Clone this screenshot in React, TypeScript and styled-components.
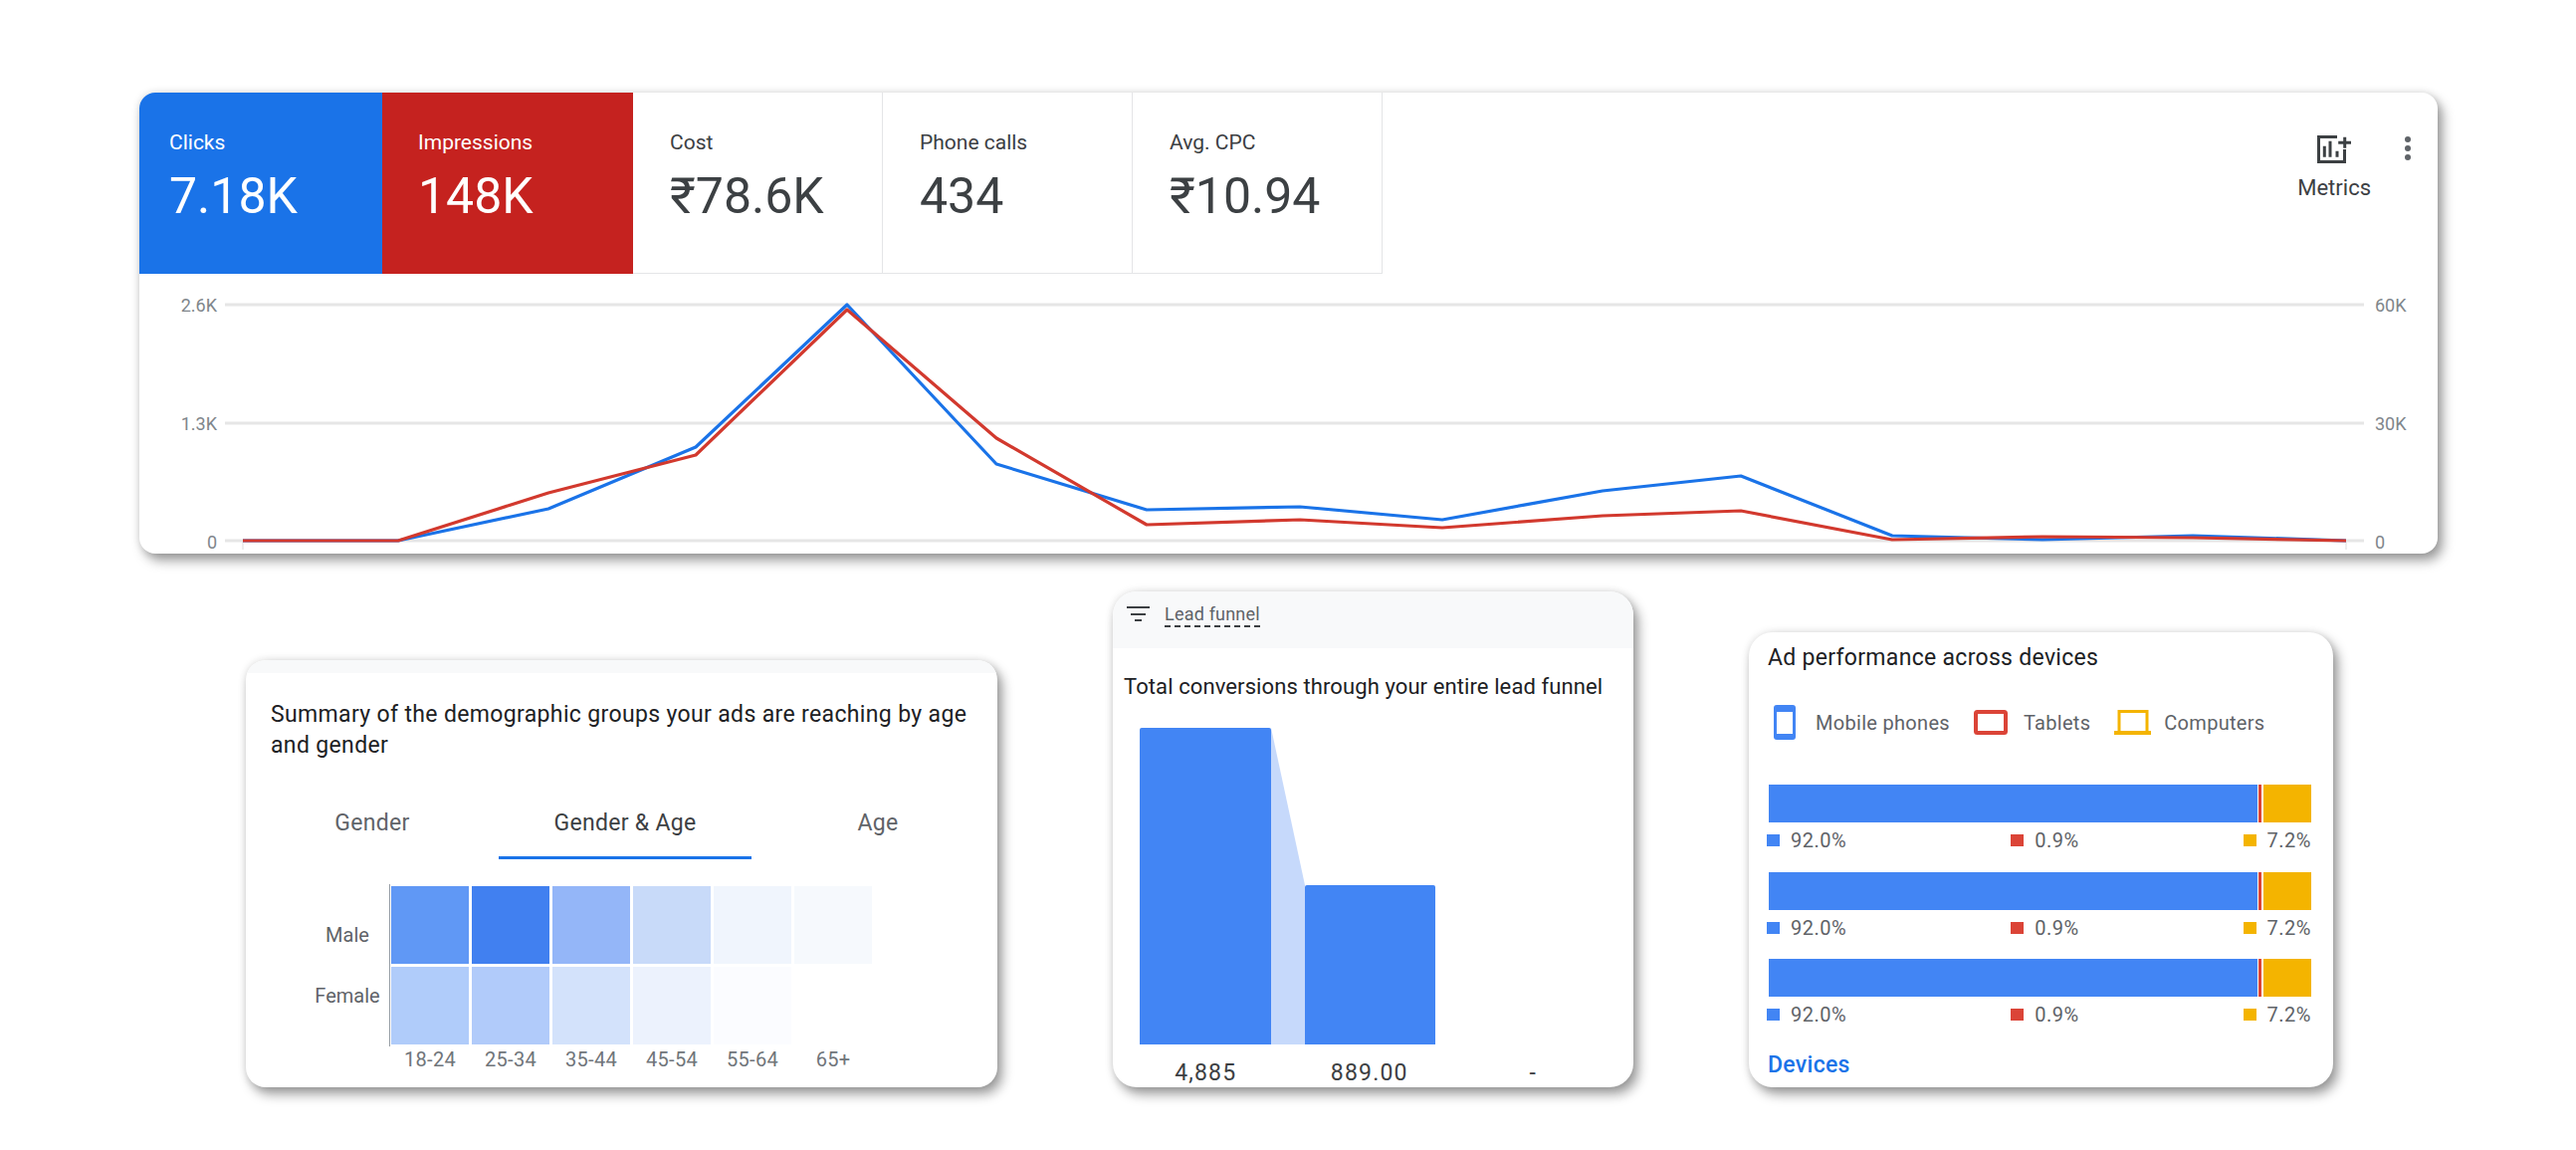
import React, { FC } from 'react';
import styled, { createGlobalStyle } from 'styled-components';

const GlobalStyle = createGlobalStyle`
  html, body {
    margin: 0;
    padding: 0;
    background: #fff;
    font-family: Roboto, "Noto Sans", sans-serif;
  }
  * { box-sizing: border-box; }
`;

const BLUE = '#4285f4';
const RED = '#db4437';
const GOLD = '#f4b400';

const tiles = [
  { label: 'Clicks', value: '7.18K', bg: '#1a73e8', width: 244, inset: 30 },
  { label: 'Impressions', value: '148K', bg: '#c5221f', width: 252, inset: 36 },
  { label: 'Cost', value: '₹78.6K', width: 251, inset: 37 },
  { label: 'Phone calls', value: '434', width: 251, inset: 37 },
  { label: 'Avg. CPC', value: '₹10.94', width: 251, inset: 37 }
];

const chartX = [244, 400, 551, 699, 851, 1001, 1152, 1306, 1449, 1610, 1749, 1901, 2052, 2203, 2357];
const clicksY = [543, 543, 511, 449, 306, 466, 512, 509, 522, 493, 478, 538, 542, 538, 543];
const imprY = [543, 543, 495, 457, 311, 440, 527, 522, 530, 518, 513, 542, 539, 540, 543];
const toPoints = (ys: number[]) => ys.map((y, i) => `${chartX[i]},${y}`).join(' ');

const heat = [
  ['#6098f5', '#4180f0', '#94b6f8', '#c8daf9', '#f0f5fd', '#f6f9fd'],
  ['#b0ccfa', '#b1cbfa', '#d3e2fb', '#ecf2fd', '#fbfcff', '#ffffff']
];
const ages = ['18-24', '25-34', '35-44', '45-54', '55-64', '65+'];

const Page = styled.div`
  width: 2588px;
  height: 1155px;
  padding: 93px 0 0 140px;
  overflow: hidden;
  background: #fff;
`;

const Card = styled.section<{ $width: number; $height: number; $radius: number }>`
  width: ${({ $width }) => $width}px;
  height: ${({ $height }) => $height}px;
  border-radius: ${({ $radius }) => $radius}px;
  background: #fff;
  overflow: hidden;
  box-shadow: 5px 7px 12px rgba(0, 0, 0, 0.38), 0 0 9px rgba(0, 0, 0, 0.12);
`;

const TileRow = styled.div`
  display: flex;
  height: 182px;
`;

const Tile = styled.div<{ $bg?: string; $width: number; $inset: number }>`
  width: ${({ $width }) => $width}px;
  padding: 38px 0 0 ${({ $inset }) => $inset}px;
  background: ${({ $bg }) => $bg || '#fff'};
  color: ${({ $bg }) => ($bg ? '#fff' : '#3c4043')};
  border-right: ${({ $bg }) => ($bg ? 'none' : '1.5px solid #e4e5e7')};
  border-bottom: ${({ $bg }) => ($bg ? 'none' : '1.5px solid #e4e5e7')};
`;

const TileLabel = styled.div`
  font-size: 21px;
  line-height: 24px;
`;

const TileValue = styled.div`
  margin-top: 14px;
  font-size: 50px;
  line-height: 56px;
`;

const Actions = styled.div`
  margin-left: auto;
  display: flex;
  align-items: flex-start;
  padding: 43px 27px 0 0;
  gap: 34px;
`;

const MetricsButton = styled.div`
  display: flex;
  flex-direction: column;
  align-items: center;
  gap: 13px;
  font-size: 22px;
  line-height: 24px;
  color: #3c4043;
`;

const Dots = styled.svg`
  margin-top: 1px;
`;

const Chart = styled.svg`
  display: block;
  width: 2309px;
  height: 281px;
`;

const AxisText = styled.text`
  font-size: 18px;
  fill: #80868b;
  dominant-baseline: central;
`;

const BottomRow = styled.div`
  display: flex;
  align-items: flex-end;
  gap: 116px;
  margin: 38px 0 0 107px;
`;

const Strip = styled.div<{ $height: number }>`
  height: ${({ $height }) => $height}px;
  background: #f8f9fa;
`;

const CardTitle = styled.h2`
  margin: 26px 0 0 25px;
  font-size: 23px;
  line-height: 31px;
  font-weight: 400;
  letter-spacing: 0.35px;
  color: #202124;
  white-space: nowrap;
`;

const Tabs = styled.div`
  display: grid;
  grid-template-columns: repeat(3, 254px);
  margin-top: 51px;
`;

const Tab = styled.div<{ $active?: boolean }>`
  padding-bottom: 21px;
  font-size: 23px;
  line-height: 24px;
  letter-spacing: 0.3px;
  text-align: center;
  color: ${({ $active }) => ($active ? '#3c4043' : '#5f6368')};
  border-bottom: 3px solid ${({ $active }) => ($active ? '#1a73e8' : 'transparent')};
`;

const Heatmap = styled.div`
  display: flex;
  margin: 25px 0 0 60px;
`;

const RowLabels = styled.div`
  width: 84px;
  display: flex;
  flex-direction: column;
  align-items: center;
  gap: 37px;
  padding-top: 39px;
  font-size: 20px;
  line-height: 24px;
  color: #5f6368;
`;

const HeatGrid = styled.div`
  display: grid;
  grid-template-columns: repeat(6, 78px);
  grid-auto-rows: 78px;
  gap: 3px;
  padding: 2px 0 2px 1px;
  border-left: 1.5px solid #9aa0a6;
`;

const HeatCell = styled.div<{ $color: string }>`
  background: ${({ $color }) => $color};
`;

const AgeLabels = styled.div`
  display: grid;
  grid-template-columns: repeat(6, 78px);
  gap: 3px;
  margin: 2px 0 0 146px;
  font-size: 20px;
  line-height: 22px;
  letter-spacing: 0.3px;
  text-align: center;
  color: #70757a;
`;

const FunnelHeader = styled.div`
  height: 57px;
  display: flex;
  align-items: flex-start;
  gap: 15px;
  padding: 14px 0 0 14px;
  background: #f8f9fa;
`;

const FilterIcon = styled.svg`
  margin-top: 1px;
`;

const FunnelTab = styled.span`
  font-size: 18px;
  line-height: 18px;
  padding-bottom: 2px;
  color: #5f6368;
  letter-spacing: 0.2px;
  border-bottom: 2px dashed #3c4043;
`;

const FunnelTitle = styled.h2`
  margin: 26px 0 0 11px;
  font-size: 22px;
  line-height: 26px;
  font-weight: 400;
  letter-spacing: 0.1px;
  color: #202124;
  white-space: nowrap;
`;

const Funnel = styled.div`
  display: flex;
  align-items: flex-end;
  height: 318px;
  margin: 28px 0 0 27px;
`;

const FunnelBar = styled.div<{ $width: number; $height: number }>`
  width: ${({ $width }) => $width}px;
  height: ${({ $height }) => $height}px;
  background: ${BLUE};
  border-radius: 2px 2px 0 0;
`;

const FunnelValues = styled.div`
  display: grid;
  grid-template-columns: repeat(3, 164.5px);
  margin: 15px 0 0 11px;
  font-size: 23px;
  line-height: 28px;
  text-align: center;
  color: #3c4043;
  letter-spacing: 1.2px;
`;

const DeviceBody = styled.div`
  padding: 13px 0 0 20px;
`;

const DeviceTitle = styled.h2`
  margin: 0 0 0 -1px;
  font-size: 23px;
  line-height: 26px;
  font-weight: 400;
  letter-spacing: 0.3px;
  color: #202124;
  white-space: nowrap;
`;

const Legend = styled.div`
  display: flex;
  align-items: center;
  gap: 24px;
  height: 35px;
  margin: 34px 0 0 5px;
`;

const LegendItem = styled.div<{ $gap: number }>`
  display: flex;
  align-items: center;
  gap: ${({ $gap }) => $gap}px;
  font-size: 20px;
  line-height: 24px;
  letter-spacing: 0.3px;
  color: #5f6368;
`;

const DeviceRows = styled.div`
  display: flex;
  flex-direction: column;
  gap: 19.5px;
  width: 547px;
  margin: 45px 0 0 -2px;
`;

const DeviceBar = styled.div`
  display: flex;
  height: 38px;
  margin-left: 2px;
`;

const Segment = styled.div<{ $color: string; $width: number; $gap?: number }>`
  width: ${({ $width }) => $width}px;
  margin-left: ${({ $gap }) => $gap || 0}px;
  background: ${({ $color }) => $color};
`;

const Stats = styled.div`
  display: flex;
  justify-content: space-between;
  margin-top: 6px;
`;

const Stat = styled.div`
  display: flex;
  align-items: center;
  gap: 11px;
  font-size: 20px;
  line-height: 24px;
  letter-spacing: 0.5px;
  color: #5f6368;
`;

const Swatch = styled.span<{ $color: string }>`
  width: 13px;
  height: 12px;
  background: ${({ $color }) => $color};
`;

const DevicesLink = styled.a`
  display: block;
  margin: 26px 0 0 -1px;
  font-size: 23px;
  line-height: 26px;
  letter-spacing: 0.3px;
  font-weight: 500;
  color: #1a73e8;
`;

const MetricsIcon: FC = () => (
  <svg width="34" height="28" viewBox="0 0 34 28" fill="none" stroke="#3c4043" strokeWidth="3">
    <path d="M20 1.5H1.5V26.5H27.5V14" />
    <path d="M27.7 1.8V12.8M21.2 7.3H34" />
    <path d="M7.3 21.7V10.7M13 21.7V5.7M20 21.7V15.7" />
  </svg>
);

const PhoneIcon: FC = () => (
  <svg width="22" height="35" viewBox="0 0 22 35">
    <rect x="0" y="0" width="22" height="35" rx="3" fill={BLUE} />
    <rect x="3" y="7" width="16" height="22" fill="#fff" />
  </svg>
);

const TabletIcon: FC = () => (
  <svg width="34" height="25" viewBox="0 0 34 25">
    <rect x="2" y="2" width="30" height="21" rx="1.5" fill="none" stroke={RED} strokeWidth="4" />
  </svg>
);

const LaptopIcon: FC = () => (
  <svg width="37" height="25" viewBox="0 0 37 25" fill="none" stroke={GOLD}>
    <path d="M5 21V1.5H33V21" strokeWidth="3" />
    <path d="M0 23H37" strokeWidth="4" />
  </svg>
);

const DeviceRow: FC = () => (
  <div>
    <DeviceBar>
      <Segment $color={BLUE} $width={491} />
      <Segment $color={RED} $width={3} $gap={1} />
      <Segment $color={GOLD} $width={48} $gap={2} />
    </DeviceBar>
    <Stats>
      <Stat><Swatch $color={BLUE} />92.0%</Stat>
      <Stat><Swatch $color={RED} />0.9%</Stat>
      <Stat><Swatch $color={GOLD} />7.2%</Stat>
    </Stats>
  </div>
);

export default function App() {
  return (
    <Page>
      <GlobalStyle />
      <Card $width={2309} $height={463} $radius={16}>
        <TileRow>
          {tiles.map(t => (
            <Tile key={t.label} $bg={t.bg} $width={t.width} $inset={t.inset}>
              <TileLabel>{t.label}</TileLabel>
              <TileValue>{t.value}</TileValue>
            </Tile>
          ))}
          <Actions>
            <MetricsButton>
              <MetricsIcon />
              Metrics
            </MetricsButton>
            <Dots width="6" height="24" viewBox="0 0 6 24" fill="#5f6368">
              <circle cx="3" cy="3" r="3" />
              <circle cx="3" cy="12" r="3" />
              <circle cx="3" cy="21" r="3" />
            </Dots>
          </Actions>
        </TileRow>
        <Chart viewBox="140 275 2309 281">
          {[306, 425, 543].map(y => (
            <line key={y} x1="226" x2="2375" y1={y} y2={y} stroke="#e6e6e6" strokeWidth="3" />
          ))}
          <line x1="244" x2="244" y1="543" y2="552" stroke="#e8e8e8" strokeWidth="1.5" />
          <line x1="2357" x2="2357" y1="543" y2="552" stroke="#e8e8e8" strokeWidth="1.5" />
          <AxisText x="218" y="306" textAnchor="end">2.6K</AxisText>
          <AxisText x="218" y="425" textAnchor="end">1.3K</AxisText>
          <AxisText x="218" y="544" textAnchor="end">0</AxisText>
          <AxisText x="2386" y="306">60K</AxisText>
          <AxisText x="2386" y="425">30K</AxisText>
          <AxisText x="2386" y="544">0</AxisText>
          <polyline points={toPoints(clicksY)} fill="none" stroke="#1a73e8" strokeWidth="3.2" strokeLinejoin="round" />
          <polyline points={toPoints(imprY)} fill="none" stroke="#d2392e" strokeWidth="3.2" strokeLinejoin="round" />
        </Chart>
      </Card>

      <BottomRow>
        <Card $width={755} $height={429} $radius={20}>
          <Strip $height={13} />
          <CardTitle>
            Summary of the demographic groups your ads are reaching by age<br />and gender
          </CardTitle>
          <Tabs>
            <Tab>Gender</Tab>
            <Tab $active>Gender &amp; Age</Tab>
            <Tab>Age</Tab>
          </Tabs>
          <Heatmap>
            <RowLabels>
              <span>Male</span>
              <span>Female</span>
            </RowLabels>
            <HeatGrid>
              {heat.flat().map((c, i) => <HeatCell key={i} $color={c} />)}
            </HeatGrid>
          </Heatmap>
          <AgeLabels>
            {ages.map(a => <span key={a}>{a}</span>)}
          </AgeLabels>
        </Card>

        <Card $width={523} $height={498} $radius={24}>
          <FunnelHeader>
            <FilterIcon width="23" height="15" viewBox="0 0 23 15" fill="none" stroke="#3c4043" strokeWidth="2">
              <path d="M0 1H23M4 8H19M8 14H15" />
            </FilterIcon>
            <FunnelTab>Lead funnel</FunnelTab>
          </FunnelHeader>
          <FunnelTitle>Total conversions through your entire lead funnel</FunnelTitle>
          <Funnel>
            <FunnelBar $width={132} $height={318} />
            <svg width="34" height="318" viewBox="0 0 34 318">
              <polygon points="0,0 34,158 34,318 0,318" fill="#c6d9fb" />
            </svg>
            <FunnelBar $width={131} $height={160} />
          </Funnel>
          <FunnelValues>
            <span>4,885</span>
            <span>889.00</span>
            <span>-</span>
          </FunnelValues>
        </Card>

        <Card $width={587} $height={457} $radius={24}>
          <DeviceBody>
            <DeviceTitle>Ad performance across devices</DeviceTitle>
            <Legend>
              <LegendItem $gap={20}><PhoneIcon />Mobile phones</LegendItem>
              <LegendItem $gap={16}><TabletIcon />Tablets</LegendItem>
              <LegendItem $gap={13}><LaptopIcon />Computers</LegendItem>
            </Legend>
            <DeviceRows>
              <DeviceRow />
              <DeviceRow />
              <DeviceRow />
            </DeviceRows>
            <DevicesLink>Devices</DevicesLink>
          </DeviceBody>
        </Card>
      </BottomRow>
    </Page>
  );
}
